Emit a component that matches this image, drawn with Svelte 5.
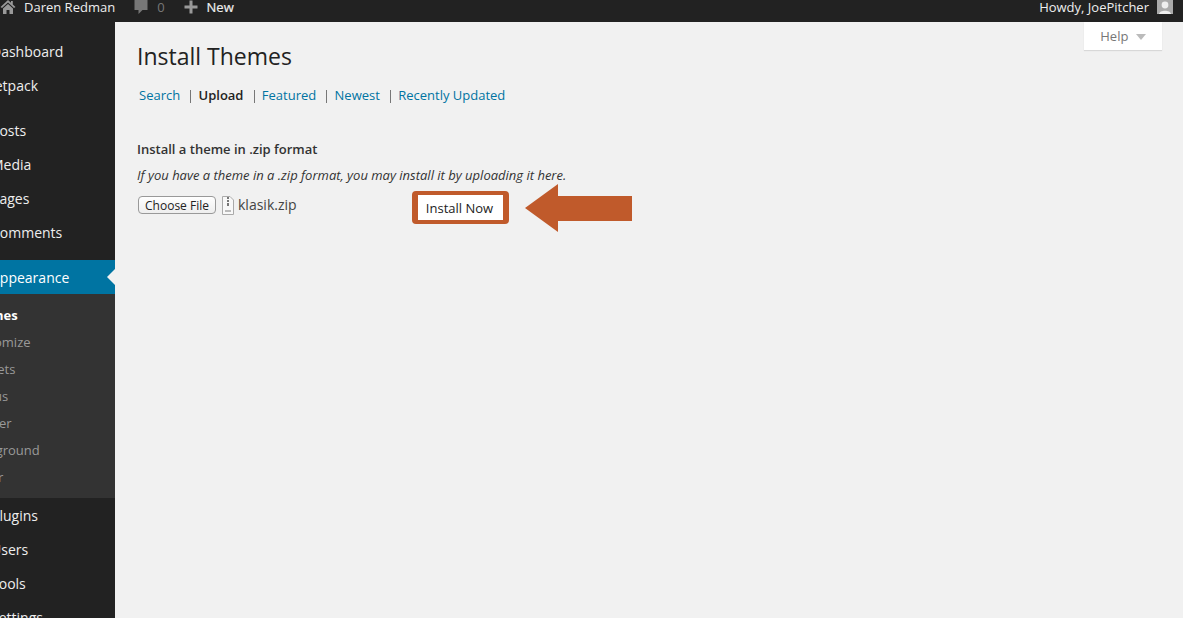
<script>
  const before = [
    { label: 'Dashboard', gap: false },
    { label: 'Jetpack', gap: false },
    { label: 'Posts', gap: true },
    { label: 'Media', gap: false },
    { label: 'Pages', gap: false },
    { label: 'Comments', gap: false }
  ];
  const sub = ['Customize', 'Widgets', 'Menus', 'Header', 'Background', 'Editor'];
  const after = ['Plugins', 'Users', 'Tools', 'Settings'];
  const tabs = ['Search', 'Upload', 'Featured', 'Newest', 'Recently Updated'];
</script>

<div class="page">
  <header class="topbar">
    <div class="bar-left">
      <svg class="home" viewBox="0 0 16 16" width="16" height="16">
        <path d="M8 1 L0.5 8 L2 9 L8 3.6 L14 9 L15.5 8 L12.8 5.4 V2 H11 V3.8 Z" fill="#999" />
        <path d="M3 9.6 L8 5 L13 9.6 V15 H9.5 V11 H6.5 V15 H3 Z" fill="#999" />
      </svg>
      <span class="site">Daren Redman</span>
      <svg class="bubble" viewBox="0 0 14 16" width="14" height="16">
        <path d="M0.5 1 H13.5 V11 H8.5 L4.5 15 V11 H0.5 Z" fill="#777" />
      </svg>
      <span class="count">0</span>
      <svg class="plus" viewBox="0 0 14 14" width="14" height="14">
        <path d="M5.5 0.5 H8.5 V5.5 H13.5 V8.5 H8.5 V13.5 H5.5 V8.5 H0.5 V5.5 H5.5 Z" fill="#999" />
      </svg>
      <span class="new">New</span>
    </div>
    <div class="bar-right">
      <span>Howdy, JoePitcher</span>
      <svg class="avatar" viewBox="0 0 16 14" width="16" height="14">
        <rect width="16" height="14" fill="#aaa" />
        <circle cx="8" cy="5" r="3.4" fill="#eee" />
        <path d="M2 14 C2.5 9.5 13.5 9.5 14 14 Z" fill="#eee" />
      </svg>
    </div>
  </header>

  <div class="body">
    <nav class="sidebar">
      <ul class="menu first">
        {#each before as item}
          <li class:gap={item.gap}><span>{item.label}</span></li>
        {/each}
        <li class="current"><span>Appearance</span></li>
      </ul>
      <ul class="submenu">
        <li class="on"><span>Themes</span></li>
        {#each sub as item}
          <li><span>{item}</span></li>
        {/each}
      </ul>
      <ul class="menu">
        {#each after as item}
          <li><span>{item}</span></li>
        {/each}
      </ul>
    </nav>

    <main class="content">
      <button class="help">Help <i class="caret"></i></button>
      <h2>Install Themes</h2>
      <ul class="tabs">
        {#each tabs as tab, i}
          <li>
            {#if tab === 'Upload'}
              <b>{tab}</b>
            {:else}
              <a href="#top">{tab}</a>
            {/if}
            {#if i < tabs.length - 1}
              <span class="sep">|</span>
            {/if}
          </li>
        {/each}
      </ul>
      <h4>Install a theme in .zip format</h4>
      <p class="note">If you have a theme in a .zip format, you may install it by uploading it here.</p>
      <div class="upload">
        <button class="choose">Choose File</button>
        <svg class="file" viewBox="0 0 12 19" width="12" height="19">
          <path d="M0.5 0.5 H8 L11.5 4 V18.5 H0.5 Z" fill="#f8f8f8" stroke="#aaa" />
          <path d="M5 1 H7 V3 H5 Z M5 4 H7 V6 H5 Z M5 7 H7 V10 H5 Z" fill="#777" />
          <path d="M3 14 H9 V16 H3 Z" fill="#bbb" />
        </svg>
        <span class="filename">klasik.zip</span>
        <button class="install">Install Now</button>
        <svg class="arrow" viewBox="0 0 107 48" width="107" height="48">
          <path d="M0 24 L33 0 V12 H107 V37 H33 V48 Z" fill="#c05a2b" />
        </svg>
      </div>
    </main>
  </div>
</div>

<style>
  :global(body) {
    margin: 0;
    background: #f1f1f1;
  }

  .page {
    width: 1183px;
    height: 618px;
    overflow: hidden;
    font-family: "Open Sans", sans-serif;
    color: #333;
  }

  ul {
    list-style: none;
    margin: 0;
    padding: 0;
  }

  .topbar {
    height: 22px;
    background: #222;
    color: #eee;
    font-size: 13px;
    line-height: 14px;
    display: flex;
    justify-content: space-between;
    align-items: flex-start;
    padding: 0 10px 0 0;
    box-sizing: border-box;
  }

  .bar-left,
  .bar-right {
    display: flex;
    align-items: center;
    height: 14px;
  }

  .home {
    margin-right: 8px;
  }

  .bubble {
    margin-left: 19px;
  }

  .count {
    margin-left: 9px;
    color: #777;
  }

  .plus {
    margin-left: 19px;
  }

  .new {
    margin-left: 9px;
    font-weight: 400;
    -webkit-text-stroke: 0.2px #eee;
  }

  .avatar {
    margin-left: 8px;
  }

  .body {
    display: flex;
    height: 596px;
  }

  .sidebar {
    width: 115px;
    flex: none;
    background: #222;
    padding-top: 13px;
    overflow: hidden;
  }

  .menu li {
    height: 34px;
    line-height: 33px;
    font-size: 14px;
    color: #eee;
    white-space: nowrap;
    position: relative;
  }

  .menu li span {
    margin-left: -9px;
    display: inline-block;
  }

  .menu li.gap {
    margin-top: 11px;
  }

  .menu li.current {
    margin-top: 10px;
    background: #0074a2;
    color: #fff;
    line-height: 35px;
  }

  .menu li.current::after {
    content: "";
    position: absolute;
    right: 0;
    top: 9px;
    border: 8px solid transparent;
    border-right-color: #f1f1f1;
  }

  .submenu {
    background: #333;
    padding: 8px 0 7px;
    height: 204px;
    box-sizing: border-box;
    margin-bottom: 1px;
  }

  .submenu li {
    height: 27px;
    line-height: 27px;
    font-size: 13px;
    color: #999;
    white-space: nowrap;
  }

  .submenu li span {
    margin-left: -33px;
    display: inline-block;
  }

  .submenu li.on {
    color: #fff;
    font-weight: 700;
  }

  .content {
    flex: 1;
    position: relative;
    padding: 0 22px;
  }

  .help {
    position: absolute;
    top: 0;
    right: 21px;
    width: 78px;
    height: 28px;
    border: none;
    background: #fff;
    box-shadow: 0 1px 1px rgba(0, 0, 0, 0.1);
    color: #777;
    font: 13px "Open Sans", sans-serif;
    padding: 0;
  }

  .caret {
    display: inline-block;
    margin-left: 4px;
    border: 5px solid transparent;
    border-top: 6px solid #bbb;
    border-bottom: 0;
    vertical-align: 1px;
  }

  h2 {
    margin: 0;
    padding-top: 18px;
    font-size: 23px;
    line-height: 32px;
    font-weight: 400;
    color: #222;
  }

  .tabs {
    display: flex;
    margin-top: 14px;
    padding-left: 2px;
    font-size: 13px;
    line-height: 18px;
  }

  .tabs a {
    color: #0074a2;
    text-decoration: none;
  }

  .tabs b {
    font-weight: 600;
    color: #222;
  }

  .sep {
    display: inline-block;
    color: #666;
    margin: 0 4px 0 3.8px;
    will-change: transform;
  }

  h4 {
    margin: 36px 0 0;
    font-size: 13px;
    line-height: 18px;
    font-weight: 600;
    color: #333;
  }

  .note {
    margin: 8px 0 0;
    font-size: 13px;
    line-height: 18px;
    font-style: italic;
    color: #333;
  }

  .upload {
    display: flex;
    align-items: center;
    margin-top: -1px;
    height: 48px;
  }

  .choose {
    width: 78px;
    height: 18px;
    padding: 0;
    margin: -4px 0 0 1px;
    border: 1px solid #999;
    border-radius: 4px;
    background: linear-gradient(#fff, #eee);
    font: 12px "Open Sans", sans-serif;
    color: #222;
  }

  .file {
    margin: -4px 0 0 6px;
  }

  .filename {
    margin: -5px 0 0 4px;
    font-size: 14px;
    color: #444;
    width: 174px;
  }

  .install {
    width: 97px;
    height: 33px;
    box-sizing: border-box;
    border-style: solid;
    border-color: #c05a2b;
    border-width: 4px 6px;
    border-radius: 4px;
    background: #fff;
    padding: 0 2px 0 0;
    font: 13px "Open Sans", sans-serif;
    color: #222;
    margin-top: 1px;
  }

  .arrow {
    margin: 1px 0 0 16px;
  }
</style>
